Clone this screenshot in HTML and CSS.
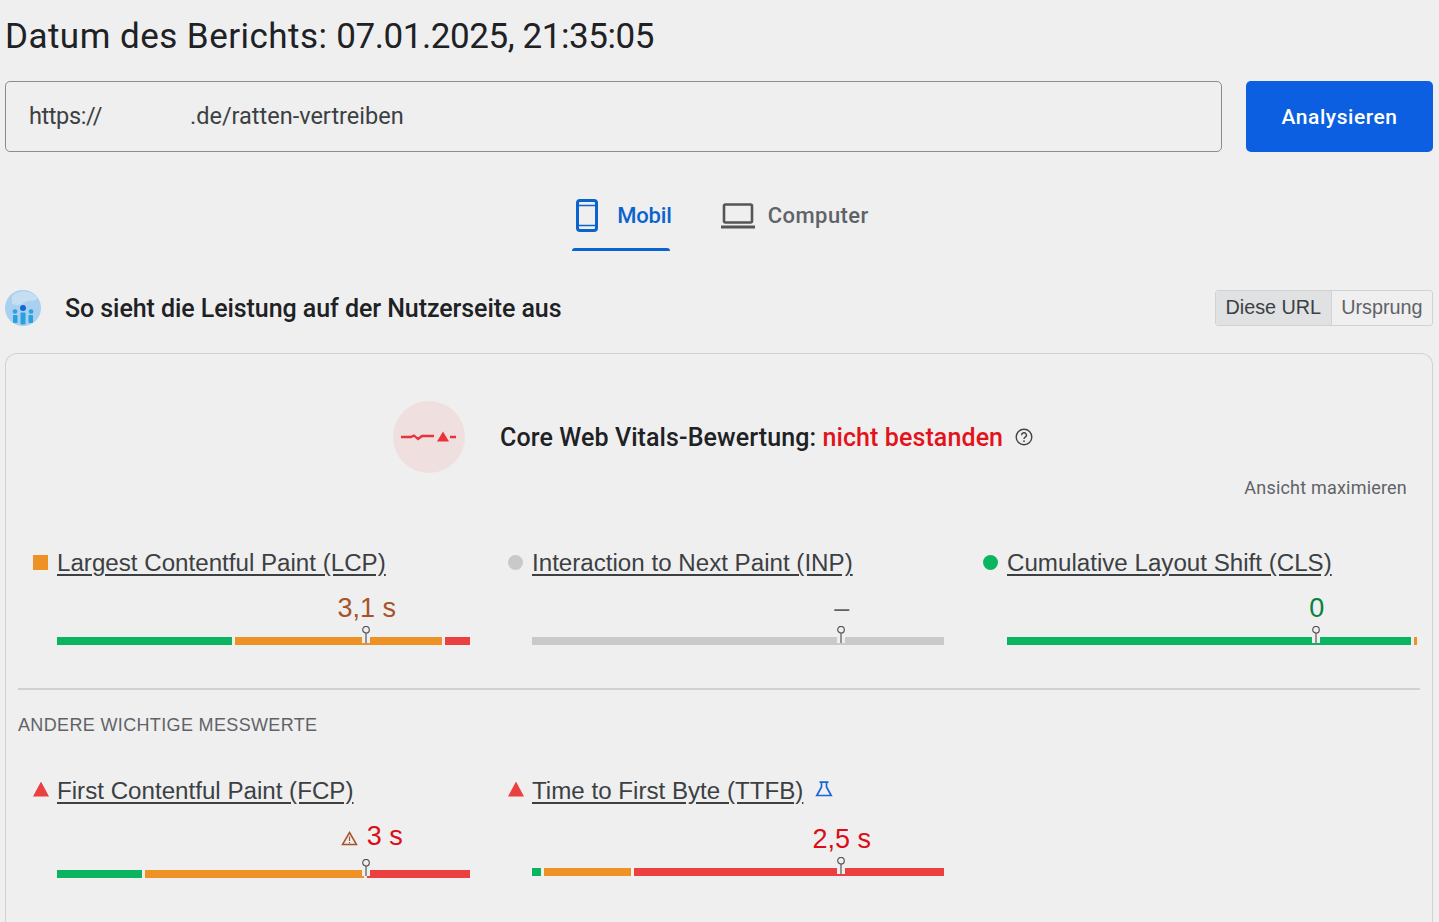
FILE: index.html
```html
<!DOCTYPE html>
<html lang="de">
<head>
<meta charset="utf-8">
<title>PageSpeed Insights</title>
<link rel="stylesheet" href="styles.css">
</head>
<body>
<h1 class="report-date"><span class="report-label">Datum des Berichts:</span> <span class="report-stamp">07.01.2025, 21:35:05</span></h1>
<div class="url-row">
  <div class="url-input"><span class="url-scheme">https://</span><span class="url-rest">.de/ratten-vertreiben</span></div>
  <button class="analyze">Analysieren</button>
</div>
<div class="tabs">
  <div class="tab active">
    <svg class="ico-phone" viewBox="0 0 22 33" width="22" height="33"><rect x="1.500" y="1.500" width="19" height="30" rx="2.500" fill="none" stroke="#0b63ce" stroke-width="3"/><path d="M2 6.500h18M2 26.500h18" stroke="#0b63ce" stroke-width="1.600"/></svg>
    <span>Mobil</span>
  </div>
  <div class="tab">
    <svg class="ico-laptop" viewBox="0 0 34 26" width="34" height="26"><rect x="3" y="1.500" width="28" height="18" rx="1.500" fill="none" stroke="#555" stroke-width="2.600"/><rect x="0" y="22.500" width="34" height="3" fill="#555"/></svg>
    <span>Computer</span>
  </div>
</div>
<div class="section-head">
  <div class="section-title">
    <svg viewBox="0 0 36 36" width="36" height="36"><circle cx="18" cy="18" r="18" fill="#a9d0ee"/><path d="M7 6a18 18 0 0 1 26 2c-4 5-9 1-13 4-3 3-8 4-13 2z" fill="#c6def2"/><circle cx="18" cy="18" r="3" fill="#1565d8"/><circle cx="10" cy="21.500" r="2.300" fill="#29a0e0"/><circle cx="26" cy="21.500" r="2.300" fill="#29a0e0"/><rect x="15.500" y="22.500" width="5" height="12" rx="1" fill="#29a0e0"/><rect x="8" y="25" width="4.500" height="8" rx="1" fill="#29a0e0"/><rect x="23.500" y="25" width="4.500" height="8" rx="1" fill="#29a0e0"/></svg>
    <span>So sieht die Leistung auf der Nutzerseite aus</span>
  </div>
  <div class="toggle"><span class="on">Diese URL</span><span>Ursprung</span></div>
</div>
<section class="card">
  <div class="verdict">
    <div class="verdict-badge">
      <svg viewBox="0 0 56 12" width="56" height="12"><path d="M0 6h10l3-1.500 4 3.500 4-3h12M49 6h6" fill="none" stroke="#e8333b" stroke-width="2.300"/><path d="M36 10.500l6-10 6 10z" fill="#e8333b"/></svg>
    </div>
    <p class="verdict-text">Core Web Vitals-Bewertung: <span class="fail">nicht bestanden</span></p>
    <svg class="help" viewBox="0 0 18 18" width="18" height="18"><circle cx="9" cy="9" r="7.800" fill="none" stroke="#444" stroke-width="1.400"/><path d="M6.600 7.200a2.400 2.400 0 1 1 3.600 2c-.9.500-1.200 1-1.200 1.800" fill="none" stroke="#444" stroke-width="1.400"/><circle cx="9" cy="13.200" r=".9" fill="#444"/></svg>
  </div>
  <div class="expand">Ansicht maximieren</div>
  <div class="metrics">
    <div class="metric">
      <div class="metric-title"><i class="mark square"></i><a>Largest Contentful Paint (LCP)</a></div>
      <div class="metric-value avg"><span>3,1 s</span></div>
      <div class="bar">
        <b class="g" style="width:175px"></b><b class="o" style="width:207px"></b><b class="r" style="width:25px"></b>
        <svg class="pin" viewBox="0 0 8 17" width="8" height="17"><circle cx="4" cy="3.700" r="3.300" fill="#efefef" stroke="#555" stroke-width="1.200"/><path d="M4 7v10" stroke="#555" stroke-width="1.200"/></svg>
      </div>
    </div>
    <div class="metric">
      <div class="metric-title"><i class="mark circle grey"></i><a>Interaction to Next Paint (INP)</a></div>
      <div class="metric-value none"><span>–</span></div>
      <div class="bar">
        <b class="n" style="width:412px"></b>
        <svg class="pin" viewBox="0 0 8 17" width="8" height="17"><circle cx="4" cy="3.700" r="3.300" fill="#efefef" stroke="#555" stroke-width="1.200"/><path d="M4 7v10" stroke="#555" stroke-width="1.200"/></svg>
      </div>
    </div>
    <div class="metric">
      <div class="metric-title"><i class="mark circle"></i><a>Cumulative Layout Shift (CLS)</a></div>
      <div class="metric-value good"><span>0</span></div>
      <div class="bar">
        <b class="g" style="width:404px"></b><b class="o" style="width:3px"></b>
        <svg class="pin" viewBox="0 0 8 17" width="8" height="17"><circle cx="4" cy="3.700" r="3.300" fill="#efefef" stroke="#555" stroke-width="1.200"/><path d="M4 7v10" stroke="#555" stroke-width="1.200"/></svg>
      </div>
    </div>
  </div>
  <hr class="divider">
  <div class="other-label">ANDERE WICHTIGE MESSWERTE</div>
  <div class="metrics lower">
    <div class="metric fcp">
      <div class="metric-title"><i class="mark triangle"></i><a>First Contentful Paint (FCP)</a></div>
      <div class="metric-value bad"><span><svg class="warn" viewBox="0 0 17 15" width="17" height="15"><path d="M8.500 1.500l7 12h-14z" fill="none" stroke="#a5522a" stroke-width="1.500"/><path d="M8.500 5.500v4.500M8.500 11v1.300" stroke="#a5522a" stroke-width="1.200"/></svg>3 s</span></div>
      <div class="bar">
        <b class="g" style="width:85px"></b><b class="o" style="width:219px"></b><b class="r" style="width:103px"></b>
        <svg class="pin" viewBox="0 0 8 17" width="8" height="17"><circle cx="4" cy="3.700" r="3.300" fill="#efefef" stroke="#555" stroke-width="1.200"/><path d="M4 7v10" stroke="#555" stroke-width="1.200"/></svg>
      </div>
    </div>
    <div class="metric ttfb">
      <div class="metric-title"><i class="mark triangle"></i><a>Time to First Byte (TTFB)</a>
        <svg class="flask" viewBox="0 0 18 16" width="18" height="16"><path d="M4.500 1.200h9M6.500 1.500v4.500L1.800 14.500h14.400L11.500 6V1.500" fill="none" stroke="#1a66d8" stroke-width="1.700"/></svg>
      </div>
      <div class="metric-value bad"><span>2,5 s</span></div>
      <div class="bar">
        <b class="g" style="width:9px"></b><b class="o" style="width:87px"></b><b class="r" style="width:310px"></b>
        <svg class="pin" viewBox="0 0 8 17" width="8" height="17"><circle cx="4" cy="3.700" r="3.300" fill="#efefef" stroke="#555" stroke-width="1.200"/><path d="M4 7v10" stroke="#555" stroke-width="1.200"/></svg>
      </div>
    </div>
  </div>
</section>
</body>
</html>
```
FILE: styles.css
```css
html, body { margin: 0; height: 922px; overflow: hidden; }
body {
  background: #efefef;
  color: #202124;
  font-family: "Liberation Sans", Arial, sans-serif;
  padding: 0 6px 0 5px;
  box-sizing: border-box;
}
.report-date {
  margin: 0;
  height: 81px;
  box-sizing: border-box;
  padding-top: 15px;
  font: 400 35px/44px Roboto, sans-serif;
  color: #202124;
}
.report-label { letter-spacing: .47px; }
.report-stamp { letter-spacing: -.42px; }
.url-row { display: flex; gap: 24px; height: 71px; }
.url-input {
  flex: 1;
  display: flex;
  align-items: center;
  box-sizing: border-box;
  border: 1.500px solid #8a8c8e;
  border-radius: 5px;
  padding: 0 0 1px 23px;
  font: 400 23.500px Roboto, sans-serif;
  color: #3c4043;
}
.url-scheme { letter-spacing: -.4px; }
.url-rest { margin-left: 88px; }
.analyze {
  width: 187px;
  border: 0;
  border-radius: 5px;
  background: #0b5fe0;
  color: #fff;
  font: 500 21px Roboto, sans-serif;
  letter-spacing: .55px;
}
.tabs {
  display: flex;
  justify-content: center;
  gap: 49px;
  height: 71px;
  margin-top: 28px;
  padding-left: 3px;
  box-sizing: border-box;
}
.tab {
  display: flex;
  align-items: center;
  gap: 13px;
  font: 500 22px Roboto, sans-serif;
  letter-spacing: .45px;
  color: #5f6368;
  height: 71px;
  box-sizing: border-box;
  position: relative;
}
.tab.active { color: #0b63ce; gap: 19px; padding-left: 4px; letter-spacing: -.15px; }
.tab.active::after {
  content: "";
  position: absolute;
  left: 0;
  right: 2px;
  bottom: 0;
  height: 3px;
  background: #0b63ce;
  border-radius: 3px 3px 0 0;
}
.section-head {
  display: flex;
  justify-content: space-between;
  align-items: center;
  height: 36px;
  margin-top: 39px;
}
.section-title {
  display: flex;
  align-items: center;
  gap: 24px;
  font: 500 25px Roboto, sans-serif;
  letter-spacing: -.07px;
  color: #202124;
}
.toggle {
  display: flex;
  height: 36px;
  box-sizing: border-box;
  border: 1.500px solid #d0d2d4;
  border-radius: 3px;
  font-size: 19.800px;
  color: #5f6368;
  line-height: 33px;
}
.toggle span { padding: 0 9.500px; }
.toggle .on { background: #dfe1e3; color: #3c4043; border-right: 1.500px solid #d0d2d4; }
.card {
  margin-top: 27px;
  height: 569px;
  box-sizing: border-box;
  border: 1.500px solid #d0d2d4;
  border-bottom: 0;
  border-radius: 12px 12px 0 0;
  padding: 0 12px;
}
.verdict {
  display: flex;
  align-items: center;
  height: 72px;
  margin-top: 47px;
  padding-left: 375px;
}
.verdict-badge {
  width: 72px;
  height: 72px;
  border-radius: 50%;
  background: #f0dfdf;
  display: flex;
  align-items: center;
  justify-content: center;
  margin-right: 35px;
}
.verdict-text {
  margin: 0 12px 0 0;
  font: 500 25px Roboto, sans-serif;
  letter-spacing: .1px;
  color: #202124;
}
.fail { color: #e3131b; }
.expand {
  text-align: right;
  margin-top: 4px;
  padding-right: 13px;
  font: 400 18px/22px Roboto, sans-serif;
  letter-spacing: .2px;
  color: #5f6368;
}
.metrics {
  display: grid;
  grid-template-columns: 475px 475px auto;
  margin-top: 49px;
  padding-left: 15px;
}
.metric-title {
  display: flex;
  align-items: center;
  height: 30px;
  font-size: 24.150px;
  color: #3c4043;
  position: relative;
  padding-left: 24px;
}
.metric-title a { text-decoration: underline; text-underline-offset: 3px; }
.mark { position: absolute; left: 0; top: 7px; width: 15px; height: 15px; background: #ee9225; }
.mark.circle { border-radius: 50%; background: #0bb55f; }
.mark.grey { background: #c9c9c9; }
.mark.triangle {
  background: #eb4040;
  width: 16px;
  top: 6px;
  clip-path: polygon(50% 0, 100% 100%, 0 100%);
}
.metric-value {
  width: 413px;
  box-sizing: border-box;
  margin-left: 24px;
  padding-left: 206.500px;
  text-align: center;
  height: 30px;
  margin-top: 15px;
  font-size: 27px;
  line-height: 30px;
}
.metric-value.avg { color: #a9522a; }
.metric-value.good { color: #0a7f42; }
.metric-value.bad { color: #dc0d18; }
.metric-value.none { color: #5f6368; }
.bar {
  position: relative;
  display: flex;
  gap: 3px;
  width: 413px;
  height: 8px;
  margin: 14px 0 0 24px;
}
.bar b { display: block; height: 8px; }
.bar .g { background: #0bb55f; }
.bar .o { background: #ee9225; }
.bar .r { background: #eb4040; }
.bar .n { background: #c9c9c9; }
.pin {
  position: absolute;
  left: 305px;
  top: -11px;
  background: linear-gradient(transparent 11px, #efefef 11px);
}
.divider {
  margin: 43px 0 0;
  border: 0;
  height: 1.500px;
  background: #cfd1d3;
}
.other-label {
  margin-top: 24px;
  font-size: 18px;
  line-height: 22px;
  letter-spacing: .35px;
  color: #5f6368;
}
.metrics.lower { margin-top: 40px; }
.warn { margin-right: 9px; vertical-align: -1px; }
.fcp .metric-value { margin-top: 15px; padding-left: 216.500px; }
.fcp .bar { margin-top: 19px; }
.ttfb .metric-value { margin-top: 18px; }
.ttfb .bar { margin-top: 14px; }
.flask { margin-left: 12px; margin-top: -3px; }
```
